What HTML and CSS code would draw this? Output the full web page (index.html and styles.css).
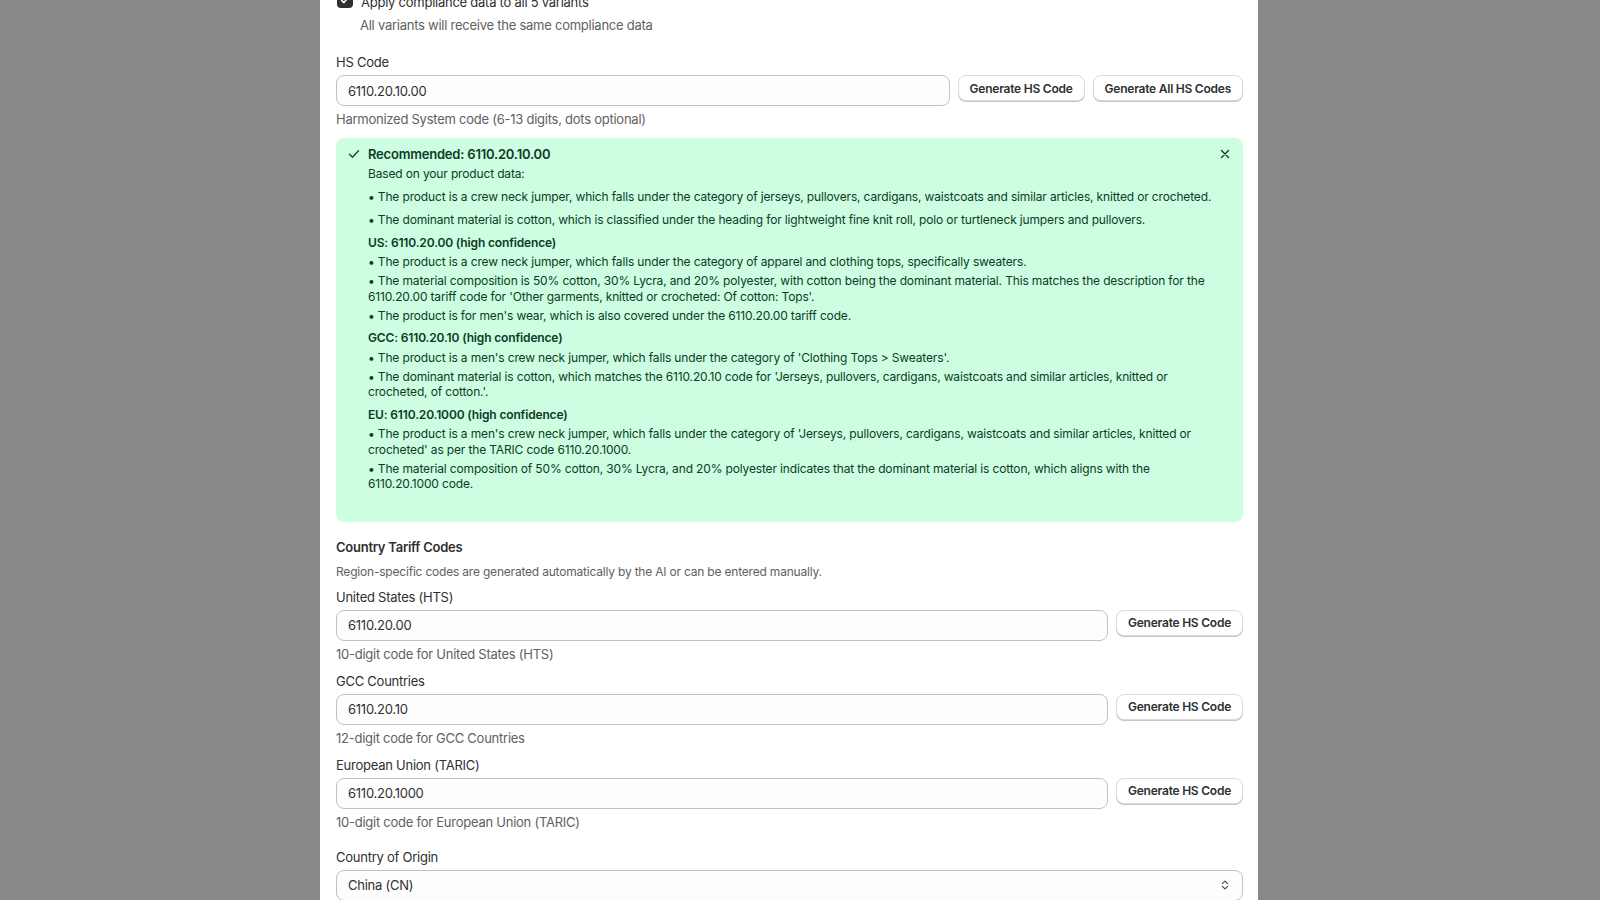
FILE: index.html
```html
<!DOCTYPE html>
<html lang="en">
<head>
    <meta charset="UTF-8">
    <meta name="viewport" content="width=device-width, initial-scale=1.0">
    <title>Compliance data</title>
    <link rel="stylesheet" href="styles.css">
</head>
<body>
    <div class="modal">
        <div class="modal-body">
            <label class="check-row">
                <span class="checkbox">
                    <svg viewBox="0 0 16 16" width="12" height="12"><path d="M3.5 8.5l3 3 6-7" fill="none" stroke="#fff" stroke-width="2" stroke-linecap="round" stroke-linejoin="round"/></svg>
                </span>
                <span>Apply compliance data to all 5 variants</span>
            </label>
            <p class="check-hint">All variants will receive the same compliance data</p>

            <div class="field field-hs">
                <div class="label">HS Code</div>
                <div class="input-row">
                    <div class="input">6110.20.10.00</div>
                    <button class="btn">Generate HS Code</button>
                    <button class="btn">Generate All HS Codes</button>
                </div>
                <div class="help">Harmonized System code (6-13 digits, dots optional)</div>
            </div>

            <div class="banner">
                <svg class="banner-icon" viewBox="0 0 16 16" width="16" height="16"><path d="M3.5 8.2l3 3 6-6.5" fill="none" stroke="#0c5132" stroke-width="1.4" stroke-linecap="round" stroke-linejoin="round"/></svg>
                <div class="banner-content">
                    <div class="banner-title">Recommended: 6110.20.10.00</div>
                    <p class="banner-intro">Based on your product data:</p>
                    <p class="point point-main">• The product is a crew neck jumper, which falls under the category of jerseys, pullovers, cardigans, waistcoats and similar articles, knitted or crocheted.</p>
                    <p class="point point-main">• The dominant material is cotton, which is classified under the heading for lightweight fine knit roll, polo or turtleneck jumpers and pullovers.</p>

                    <h4 class="region">US: 6110.20.00 (high confidence)</h4>
                    <p class="point">• The product is a crew neck jumper, which falls under the category of apparel and clothing tops, specifically sweaters.</p>
                    <p class="point">• The material composition is 50% cotton, 30% Lycra, and 20% polyester, with cotton being the dominant material. This matches the description for the 6110.20.00 tariff code for 'Other garments, knitted or crocheted: Of cotton: Tops'.</p>
                    <p class="point">• The product is for men's wear, which is also covered under the 6110.20.00 tariff code.</p>

                    <h4 class="region">GCC: 6110.20.10 (high confidence)</h4>
                    <p class="point">• The product is a men's crew neck jumper, which falls under the category of 'Clothing Tops &gt; Sweaters'.</p>
                    <p class="point">• The dominant material is cotton, which matches the 6110.20.10 code for 'Jerseys, pullovers, cardigans, waistcoats and similar articles, knitted or crocheted, of cotton.'.</p>

                    <h4 class="region">EU: 6110.20.1000 (high confidence)</h4>
                    <p class="point">• The product is a men's crew neck jumper, which falls under the category of 'Jerseys, pullovers, cardigans, waistcoats and similar articles, knitted or crocheted' as per the TARIC code 6110.20.1000.</p>
                    <p class="point">• The material composition of 50% cotton, 30% Lycra, and 20% polyester indicates that the dominant material is cotton, which aligns with the 6110.20.1000 code.</p>
                </div>
                <button class="banner-close" aria-label="Dismiss">
                    <svg viewBox="0 0 16 16" width="14" height="14"><path d="M4 4l8 8M12 4l-8 8" stroke="#0c3b26" stroke-width="1.6" stroke-linecap="round"/></svg>
                </button>
            </div>

            <h3 class="section-title">Country Tariff Codes</h3>
            <p class="section-hint">Region-specific codes are generated automatically by the AI or can be entered manually.</p>

            <div class="field">
                <div class="label">United States (HTS)</div>
                <div class="input-row">
                    <div class="input">6110.20.00</div>
                    <button class="btn">Generate HS Code</button>
                </div>
                <div class="help">10-digit code for United States (HTS)</div>
            </div>

            <div class="field">
                <div class="label">GCC Countries</div>
                <div class="input-row">
                    <div class="input">6110.20.10</div>
                    <button class="btn">Generate HS Code</button>
                </div>
                <div class="help">12-digit code for GCC Countries</div>
            </div>

            <div class="field">
                <div class="label">European Union (TARIC)</div>
                <div class="input-row">
                    <div class="input">6110.20.1000</div>
                    <button class="btn">Generate HS Code</button>
                </div>
                <div class="help">10-digit code for European Union (TARIC)</div>
            </div>

            <div class="field field-origin">
                <div class="label">Country of Origin</div>
                <div class="select">
                    <span>China (CN)</span>
                    <svg viewBox="0 0 16 16" width="14" height="14"><path d="M5 6.5l3-3 3 3M5 9.5l3 3 3-3" fill="none" stroke="#4a4a4a" stroke-width="1.3" stroke-linecap="round" stroke-linejoin="round"/></svg>
                </div>
            </div>
        </div>
    </div>
</body>
</html>
```

FILE: styles.css
```css
body {
    margin: 0;
    background-color: #898989;
    font-family: Inter, "Liberation Sans", sans-serif;
    letter-spacing: -0.25px;
    color: #303030;
    height: 900px;
    overflow: hidden;
}

.modal {
    display: flow-root;
    width: 938px;
    margin-left: 320px;
    height: 900px;
    background-color: #ffffff;
    box-sizing: border-box;
}

.modal-body {
    padding: 0 15px 0 16px;
    margin-top: -8px;
}

p {
    margin: 0;
}

.check-row {
    display: flex;
    gap: 8px;
    font-size: 13px;
    line-height: 20px;
    padding-left: 1px;
}

.checkbox {
    width: 16px;
    height: 16px;
    border-radius: 4px;
    background-color: #303030;
    display: flex;
    align-items: center;
    justify-content: center;
}

.check-hint {
    padding-left: 24px;
    margin-top: 3px;
    font-size: 13px;
    line-height: 20px;
    color: #616161;
}

.field {
    margin-top: 7px;
}

.field-hs {
    margin-top: 17px;
}

.field-origin {
    margin-top: 15px;
}

.label {
    font-size: 13px;
    line-height: 20px;
    margin-bottom: 3px;
}

.input-row {
    display: flex;
    align-items: flex-start;
    gap: 8px;
}

.input,
.select {
    flex: 1;
    height: 31px;
    box-sizing: border-box;
    border: 1px solid #c2c2c2;
    border-radius: 8px;
    background-color: #fdfdfd;
    padding: 0 11px;
    font-size: 13px;
    display: flex;
    align-items: center;
}

.select {
    justify-content: space-between;
    padding-right: 10px;
}

.btn {
    height: 26px;
    padding: 0 11px;
    background-color: #ffffff;
    border: 1px solid #dcdcdc;
    border-radius: 8px;
    box-shadow: 0 1px 0 #c6c6c6;
    font-family: inherit;
    letter-spacing: -0.24px;
    font-size: 12px;
    font-weight: 600;
    color: #303030;
    white-space: nowrap;
}

.help {
    margin-top: 3px;
    font-size: 13px;
    line-height: 20px;
    color: #616161;
}

.banner {
    position: relative;
    margin-top: 9px;
    display: flex;
    gap: 6px;
    padding: 6px 28px 30px 10px;
    background-color: #cdfee1;
    border-radius: 8px;
    color: #0c3b26;
}

.banner-icon {
    flex: none;
    margin-top: 2px;
}

.banner-content {
    flex: 1;
}

.banner-title {
    font-size: 13px;
    font-weight: 600;
    line-height: 20px;
    letter-spacing: -0.2px;
}

.banner-intro {
    font-size: 12px;
    line-height: 16px;
    margin-top: 1.5px;
    letter-spacing: -0.15px;
}

.point {
    font-size: 12px;
    line-height: 15.5px;
    margin-top: 3.5px;
    letter-spacing: -0.15px;
}

.point-main {
    margin-top: 7.5px;
}

.region {
    margin: 7px 0 0;
    font-size: 12px;
    font-weight: 600;
    line-height: 16px;
    letter-spacing: -0.15px;
}

.banner-close {
    position: absolute;
    top: 6px;
    right: 8px;
    width: 20px;
    height: 20px;
    padding: 0;
    border: none;
    background: none;
    display: flex;
    align-items: center;
    justify-content: center;
}

.section-title {
    margin: 15px 0 0;
    font-size: 13px;
    font-weight: 600;
    line-height: 20px;
}

.section-hint {
    margin-top: 7px;
    font-size: 12px;
    line-height: 16px;
    color: #616161;
    letter-spacing: -0.2px;
}
```
